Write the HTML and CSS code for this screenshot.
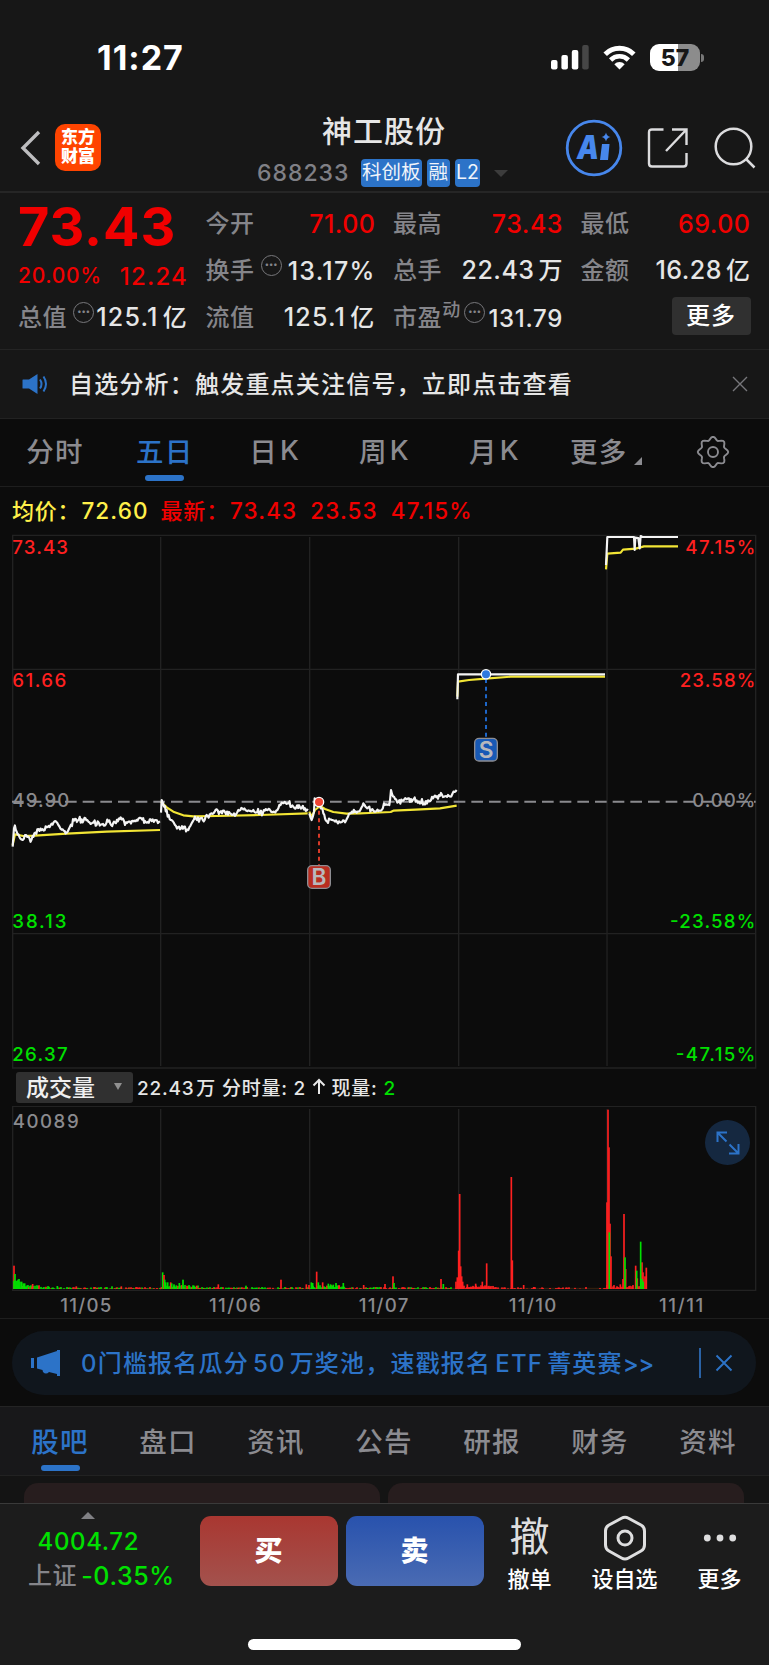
FILE: index.html
```html
<!DOCTYPE html>
<html lang="zh-CN">
<head>
    <meta charset="UTF-8">
    <meta name="viewport" content="width=device-width, initial-scale=1.0">
    <title>神工股份 688233</title>
    <link rel="stylesheet" href="styles.css">
</head>
<body>

<div class="status-bar">
    <span class="clock">11:27</span>
    <div class="status-icons">
        <svg class="signal" width="38" height="25" viewBox="0 0 38 25">
            <rect x="0" y="15" width="6.5" height="9.5" rx="2" fill="#fff"/>
            <rect x="10.4" y="10" width="6.5" height="14.5" rx="2" fill="#fff"/>
            <rect x="20.8" y="5" width="6.5" height="19.5" rx="2" fill="#fff"/>
            <rect x="31.2" y="0" width="6.5" height="24.5" rx="2" fill="#464646"/>
        </svg>
        <svg class="wifi" width="33" height="25" viewBox="0 0 33 25">
            <path d="M2.2 9.2a20.3 20.3 0 0 1 28.6 0" fill="none" stroke="#fff" stroke-width="5"/>
            <path d="M7.6 15a12.6 12.6 0 0 1 17.8 0" fill="none" stroke="#fff" stroke-width="4.6"/>
            <path d="M16.5 24.5l-5.2-5.3a7.4 7.4 0 0 1 10.4 0z" fill="#fff"/>
        </svg>
        <div class="battery">57</div>
    </div>
</div>

<header class="header">
    <svg class="back" width="22" height="36" viewBox="0 0 22 36"><path d="M19 2L3 18l16 16" fill="none" stroke="#bdbdbf" stroke-width="3.4"/></svg>
    <div class="logo">东方<br>财富</div>
    <div class="title">
        <h1>神工股份</h1>
        <div class="code">
            <span class="num">688233</span>
            <span class="tag">科创板</span>
            <span class="tag">融</span>
            <span class="tag">L2</span>
            <i class="tri-down"></i>
        </div>
    </div>
    <div class="actions">
        <svg width="58" height="58" viewBox="0 0 58 58">
            <circle cx="29" cy="29" r="26.8" fill="none" stroke="#4787ec" stroke-width="2.8"/>
            <text x="12" y="39.5" class="ai" textLength="22" lengthAdjust="spacingAndGlyphs">A</text>
            <path d="M37 25h7.500l-1.500 16h-8z" fill="#4787ec"/>
            <path d="M41 13.500q.8 3.700 4.500 4.500q-3.700.8-4.500 4.500q-.8-3.700-4.500-4.500q3.700-.8 4.500-4.500z" fill="#4787ec"/>
        </svg>
        <svg class="share" width="42" height="42" viewBox="0 0 42 42" fill="none" stroke="#dcdcde" stroke-width="2.400">
            <path d="M16.500 2.500H5Q2 2.500 2 5.500V36.500Q2 39.500 5 39.500H36.500Q39.500 39.500 39.500 36.500V26"/>
            <path d="M25 2.500H39.500V18M39 3L19 24"/>
        </svg>
        <svg class="search" width="44" height="44" viewBox="0 0 44 44" fill="none" stroke="#dcdcde" stroke-width="2.500">
            <circle cx="20.500" cy="20.500" r="17.800"/><path d="M33 33l8.500 8.500"/>
        </svg>
    </div>
</header>

<section class="quote">
    <div class="price">
        <div class="last">73.43</div>
        <div class="change"><span class="pct">20.00%</span><span>12.24</span></div>
    </div>
    <div class="cell"><label>今开</label><b class="up">71.00</b></div>
    <div class="cell"><label>最高</label><b class="up">73.43</b></div>
    <div class="cell"><label>最低</label><b class="up">69.00</b></div>
    <div class="cell"><label>换手</label><i class="dots">•••</i><b class="wide">13.17%</b></div>
    <div class="cell"><label>总手</label><b>22.43<em>万</em></b></div>
    <div class="cell"><label>金额</label><b>16.28<em>亿</em></b></div>
    <div class="cell"><label>总值</label><i class="dots">•••</i><b class="wide">125.1<em>亿</em></b></div>
    <div class="cell"><label>流值</label><b class="wide">125.1<em>亿</em></b></div>
    <div class="cell"><label>市盈</label><sup>动</sup><i class="dots">•••</i><b class="small">131.79</b></div>
    <div class="cell"><button class="more">更多</button></div>
</section>

<section class="notice">
    <svg width="28" height="22" viewBox="0 0 28 22">
        <path d="M1 6.500h6L15.500 1v20L7 15.500H1Q.5 15.500.5 15V7Q.5 6.500 1 6.500z" fill="#2c73c8"/>
        <path d="M18 6.500q3 4.500 0 9M21.500 3.500q5 7.500 0 15" fill="none" stroke="#2c73c8" stroke-width="2"/>
    </svg>
    <p>自选分析：触发重点关注信号，立即点击查看</p>
    <svg class="close" width="16" height="16" viewBox="0 0 16 16"><path d="M1 1l14 14M15 1L1 15" stroke="#77777b" stroke-width="1.400"/></svg>
</section>

<nav class="tabs periods">
    <a>分时</a>
    <a class="active">五日</a>
    <a>日<span>K</span></a>
    <a>周<span>K</span></a>
    <a>月<span>K</span></a>
    <a class="drop">更多<i class="corner"></i></a>
    <a><svg width="34" height="32" viewBox="-17 -16 34 32" fill="none" stroke="#8b8b90" stroke-width="1.900">
        <path id="gear"/>
        <circle r="5"/>
    </svg></a>
</nav>

<div class="legend">
    <span class="avg">均价：<b>72.60</b></span>
    <span class="new">最新：<b>73.43</b><b>23.53</b><b>47.15%</b></span>
</div>

<!-- chart units are a third of a pixel -->
<svg class="price-chart" id="priceChart" viewBox="0 0 2307 1605">
    <g class="grid">
        <path d="M38 4H2267V1602H38ZM38 406H2267M38 1199H2267"/>
        <path d="M482 9V1596M929 9V1596M1376 9V1596M1821 9V1596"/>
    </g>
    <path class="zero" d="M36 803H2267"/>
    <g id="lines"></g>
    <g class="marker sell">
        <path d="M1458 435V613"/>
        <circle cx="1458" cy="421" r="14"/>
        <rect x="1424" y="613" width="68" height="68" rx="13"/>
        <text x="1458" y="671">S</text>
    </g>
    <g class="marker buy">
        <path d="M957 830V994"/>
        <circle cx="957" cy="804" r="14"/>
        <rect x="923" y="995" width="68" height="68" rx="13"/>
        <text x="957" y="1054">B</text>
    </g>
    <g class="axis">
        <text class="up" x="37" y="61" textLength="167">73.43</text>
        <text class="up" x="37" y="460" textLength="162">61.66</text>
        <text x="37" y="820" textLength="171">49.90</text>
        <text class="down" x="37" y="1181" textLength="162">38.13</text>
        <text class="down" x="37" y="1580" textLength="166">26.37</text>
        <text class="up" x="2056" y="61" textLength="210">47.15%</text>
        <text class="up" x="2039" y="460" textLength="227">23.58%</text>
        <text x="2077" y="820" textLength="189">0.00%</text>
        <text class="down" x="2010" y="1181" textLength="256">-23.58%</text>
        <text class="down" x="2027" y="1580" textLength="239">-47.15%</text>
    </g>
</svg>

<div class="volume-head">
    <div class="select">成交量<i class="tri-down"></i></div>
    <p>22.43<em>万</em> 分时量: 2 <svg width="14" height="17" viewBox="0 0 14 17"><path d="M7 16V2M1.500 7.500L7 2l5.500 5.500" fill="none" stroke="#e8e8e8" stroke-width="2"/></svg> 现量: <span class="down">2</span></p>
</div>

<div class="volume">
    <svg id="volumeChart" class="volume-chart" viewBox="0 0 2307 636">
        <g class="grid">
            <path d="M38 1H2267V553H38Z"/>
            <path d="M482 9V552M929 9V552M1376 9V552M1821 9V552"/>
        </g>
        <g id="bars"></g>
        <g class="axis">
            <text x="38" y="66" textLength="198">40089</text>
            <text x="181" y="617" textLength="153">11/05</text>
            <text x="627" y="617" textLength="155">11/06</text>
            <text x="1076" y="617" textLength="149">11/07</text>
            <text x="1526" y="617" textLength="143">11/10</text>
            <text x="1977" y="617" textLength="133">11/11</text>
        </g>
    </svg>
    <div class="expand">
        <svg width="24" height="24" viewBox="0 0 24 24" fill="none" stroke="#2c73c8" stroke-width="2"><path d="M1.500 11V1.500H11M2 2l8.500 8.500M22.500 13v9.500H13M22 22l-8.500-8.500"/></svg>
    </div>
</div>

<div class="promo">
    <svg width="32" height="28" viewBox="0 0 32 28" fill="#2c73c8">
        <path d="M1 9h3v10H1zM7 8.500L27 2V1h3v26h-3v-2l-8-2q-3 3-6 0l-.5-2L7 19.500z"/>
    </svg>
    <p>0门槛报名瓜分<span>50</span>万奖池，速戳报名<span>ETF</span>菁英赛<b>&gt;&gt;</b></p>
    <i class="bar"></i>
    <svg class="close" width="18" height="18" viewBox="0 0 18 18"><path d="M1.500 1.500l15 15M16.500 1.500l-15 15" stroke="#2c73c8" stroke-width="1.900"/></svg>
</div>

<nav class="tabs sections">
    <a class="active">股吧</a>
    <a>盘口</a>
    <a>资讯</a>
    <a>公告</a>
    <a>研报</a>
    <a>财务</a>
    <a>资料</a>
</nav>

<div class="cards">
    <div class="card"></div>
    <div class="card"></div>
</div>

<footer class="toolbar">
    <div class="index">
        <i class="tri-up"></i>
        <div class="points">4004.72</div>
        <div class="index-row"><label>上证</label><span>-0.35%</span></div>
    </div>
    <button class="buy-btn">买</button>
    <button class="sell-btn">卖</button>
    <div class="tool t1"><span class="glyph">撤</span><span>撤单</span></div>
    <div class="tool t2">
        <svg width="44" height="46" viewBox="0 0 44 46" fill="none" stroke="#dededf" stroke-width="3">
            <path d="M18.500 3.200q3.500-2 7 0L38 10q3.500 2 3.500 6v14q0 4-3.500 6l-12.500 7q-3.500 2-7 0L6 36q-3.500-2-3.500-6V16q0-4 3.500-6z"/>
            <circle cx="22" cy="23" r="7"/>
        </svg>
        <span>设自选</span>
    </div>
    <div class="tool t3">
        <svg width="44" height="46" viewBox="0 0 44 46" fill="#dededf"><circle cx="9.300" cy="23" r="3.400"/><circle cx="22" cy="23" r="3.400"/><circle cx="34.700" cy="23" r="3.400"/></svg>
        <span>更多</span>
    </div>
    <div class="home"></div>
</footer>

<script src="chart.js"></script>
</body>
</html>
```
FILE: styles.css
```css
* {
    box-sizing: border-box;
}

body {
    margin: 0;
    width: 769px;
    height: 1665px;
    overflow: hidden;
    background: #0c0c0c;
    color: #e6e6e6;
    font-family: Inter, "Noto Sans CJK SC", sans-serif;
    font-size: 24px;
    font-weight: 500;
}

p, h1 {
    margin: 0;
}

i, em {
    font-style: normal;
}

svg {
    display: block;
    flex: none;
}

button {
    border: none;
    padding: 0;
    font-family: inherit;
}

.up {
    color: #f00000;
    fill: #ff2020;
}

.down {
    color: #00e000;
    fill: #00e000;
}

/* Status bar */
.status-bar {
    height: 104px;
    padding: 11px 65px 0 97px;
    background: #171717;
    display: flex;
    justify-content: space-between;
    align-items: center;
}

.clock {
    font-size: 34px;
    font-weight: 700;
    color: #fff;
    line-height: 1;
    letter-spacing: 1px;
}

.status-icons {
    display: flex;
    align-items: center;
}

.wifi {
    margin: 0 14px 0 14px;
}

.battery {
    position: relative;
    width: 50px;
    height: 27px;
    border-radius: 9px;
    background: linear-gradient(to right, #fff 57%, #8c8c8c 57%);
    color: #171717;
    font-size: 23px;
    font-weight: 800;
    line-height: 28px;
    text-align: center;
    margin-right: 4px;
}

.battery::after {
    content: "";
    position: absolute;
    right: -4px;
    top: 10px;
    width: 3px;
    height: 8px;
    border-radius: 0 3px 3px 0;
    background: #777;
}

/* Header */
.header {
    height: 89px;
    background: #171717;
    border-bottom: 2px solid #262626;
    display: flex;
    align-items: center;
    padding: 0 12px 0 20px;
}

.logo {
    width: 46px;
    height: 47px;
    margin: -1px 0 0 13px;
    padding-top: 4px;
    border-radius: 10px;
    background: #ff4400;
    color: #fff;
    font-size: 17px;
    font-weight: 900;
    line-height: 19.500px;
    text-align: center;
}

.title {
    flex: none;
    margin-left: 156px;
    width: 250px;
    height: 87px;
}

.title h1 {
    height: 50px;
    padding: 8px 0 0 65px;
    font-size: 30px;
    font-weight: 500;
    line-height: 38px;
    letter-spacing: 1px;
}

.code {
    display: flex;
    align-items: center;
    margin-top: 5px;
    white-space: nowrap;
}

.num {
    flex: none;
    width: 100.500px;
    color: #808086;
    font-size: 23px;
    line-height: 28px;
    letter-spacing: 1px;
}

.tag {
    height: 28px;
    padding: 0 1.500px;
    margin-right: 5px;
    border-radius: 4px;
    background: #2c73c8;
    color: #f0f4fa;
    font-size: 19.500px;
    font-weight: 400;
    line-height: 27px;
}

.num + .tag {
    margin-left: 3px;
}

.tri-down {
    border: 7px solid transparent;
    border-top-color: #3c3c3c;
    border-bottom: none;
    margin-left: 9px;
}

.actions {
    margin-left: auto;
    display: flex;
    align-items: center;
}

.ai {
    font-size: 33px;
    font-weight: 900;
    font-style: italic;
    fill: #4787ec;
}

.share {
    margin-left: 24px;
}

.search {
    margin-left: 24px;
}

/* Quote */
.quote {
    height: 157px;
    padding: 7px 20px 0 18px;
    background: #171717;
    border-bottom: 1px solid #242424;
    display: grid;
    grid-template-columns: repeat(4, 168px);
    grid-template-rows: repeat(3, 47px);
    column-gap: 19.500px;
}

.price {
    grid-row: span 2;
    color: #f00000;
}

.last {
    font-size: 54px;
    font-weight: 700;
    line-height: 54px;
    height: 58px;
    letter-spacing: .9px;
}

.change {
    display: flex;
    justify-content: space-between;
    align-items: center;
    line-height: 38px;
    letter-spacing: 1.200px;
    margin-right: -2px;
}

.pct {
    font-size: 21px;
    line-height: 32px;
    margin-top: -3px;
    letter-spacing: .7px;
}

.cell {
    display: flex;
    align-items: center;
    line-height: 46px;
}

.cell label, .index label {
    color: #85858a;
    letter-spacing: .6px;
}

.cell b {
    margin: 0 -2px 0 auto;
    font-size: 25px;
    font-weight: 500;
    letter-spacing: .5px;
    white-space: nowrap;
}

.cell b.wide {
    letter-spacing: 1.250px;
}

.cell b.small {
    font-size: 24px;
    letter-spacing: .7px;
    padding-top: 3px;
}

.cell em {
    margin-left: 4px;
    font-size: 24px;
}

.cell sup {
    width: 20px;
    height: 40px;
    color: #85858a;
    font-size: 18px;
    line-height: 24px;
}

.dots {
    width: 21px;
    height: 21px;
    margin: -10px -4px 0 6px;
    border: 1.500px solid #77777b;
    border-radius: 50%;
    color: #85858a;
    font-size: 8px;
    line-height: 17px;
    text-align: center;
    flex: none;
}

sup + .dots {
    margin-left: 2px;
}

.more {
    width: 79px;
    height: 38px;
    margin: -4px -2px 0 auto;
    border-radius: 4px;
    background: #303030;
    color: #fff;
    font-size: 24px;
    font-weight: 500;
    letter-spacing: 1px;
    line-height: 37px;
}

/* Notice */
.notice {
    height: 69px;
    padding: 0 21px 0 22px;
    background: #171717;
    border-bottom: 1px solid #222;
    display: flex;
    align-items: center;
}

.notice p {
    margin: -4px 0 0 19px;
    letter-spacing: 1.200px;
}

.notice .close {
    margin: 0 0 0 auto;
}

/* Tabs */
.tabs {
    display: flex;
    font-size: 27.500px;
    color: #8b8b90;
}

.tabs a {
    position: relative;
    width: 108px;
    padding-bottom: 2px;
    display: flex;
    justify-content: center;
    align-items: center;
    letter-spacing: 1.200px;
}

.tabs .active {
    color: #2c73c8;
}

.tabs .active::after {
    content: "";
    position: absolute;
    bottom: 4px;
    left: 50%;
    width: 39px;
    height: 6px;
    margin-left: -19.500px;
    border-radius: 3px;
    background: #2c73c8;
}

.periods {
    height: 68px;
    border-bottom: 1px solid #1e1e1e;
}

.periods a {
    width: 110px;
    padding-bottom: 5px;
}

.periods .active::after {
    bottom: 5px;
}

.periods .drop {
    padding-left: 4px;
}

.periods a:last-child {
    padding: 0 2px 2px 0;
}

.periods span {
    margin-left: 2px;
}

.corner {
    border: 4px solid #8b8b90;
    border-left-color: transparent;
    border-top-color: transparent;
    margin: 22px 0 0 7px;
}

/* Legend above the chart */
.legend {
    height: 47px;
    padding: 0 0 4px 12px;
    display: flex;
    align-items: center;
    font-size: 22px;
    white-space: nowrap;
}

.legend span {
    letter-spacing: .8px;
}

.legend b {
    font-size: 22.500px;
    font-weight: 500;
    letter-spacing: 1.100px;
    margin: 0 12px 0 1px;
}

.avg {
    color: #fff04a;
}

.new {
    color: #f00000;
}

/* Charts */
.price-chart {
    width: 769px;
    height: 535px;
}

.grid {
    fill: none;
    stroke: #222;
    stroke-width: 4;
}

.zero {
    stroke: #8a8a8e;
    stroke-width: 6;
    stroke-dasharray: 35 18;
}

.axis text {
    fill: #8a8a8e;
    font-size: 56px;
}

.axis text.up {
    fill: #ff2020;
}

.axis text.down {
    fill: #00e000;
}

#lines path {
    fill: none;
    stroke-width: 6.500;
    stroke-linejoin: round;
}

.avg-line {
    stroke: #f2e535;
}

.price-line {
    stroke: #f4f4f4;
}

.marker path {
    stroke-width: 6;
    stroke-dasharray: 12 11;
}

.marker rect {
    stroke: #8d8d92;
    stroke-width: 4;
}

.marker text {
    fill: #b8b8bc;
    font-size: 68px;
    font-weight: 600;
    text-anchor: middle;
}

.marker circle {
    stroke: #fff;
    stroke-width: 4;
}

.sell path {
    stroke: #1d66c9;
}

.sell circle {
    fill: #2f7ae0;
}

.sell rect {
    fill: #1859b5;
}

.buy path {
    stroke: #d83a28;
}

.buy circle {
    fill: #f04433;
}

.buy rect {
    fill: #b92d20;
}

/* Volume */
.volume-head {
    height: 37px;
    padding-left: 16px;
    display: flex;
    align-items: center;
    font-size: 19px;
}

.select {
    width: 117px;
    height: 31px;
    margin-top: -1px;
    padding: 0 0 2px 10px;
    border-radius: 3px;
    background: #303030;
    display: flex;
    align-items: center;
    font-size: 23px;
    color: #f0f0f0;
}

.select .tri-down {
    border-width: 7px 4.500px 0;
    border-top-color: #909090;
    margin-left: 19px;
}

.volume-head p {
    margin: -3px 0 0 4px;
    white-space: pre;
    letter-spacing: .75px;
}

.volume-head em {
    margin-left: 2px;
}

.volume-head p svg {
    display: inline-block;
}

.volume {
    position: relative;
    height: 213px;
    border-bottom: 1px solid #1e1e1e;
}

.volume-chart {
    width: 769px;
    height: 212px;
}

.expand {
    position: absolute;
    left: 705px;
    top: 14px;
    width: 45px;
    height: 45px;
    border-radius: 50%;
    background: #152840;
    display: flex;
    align-items: center;
    justify-content: center;
}

/* Promo */
.promo {
    height: 64px;
    margin: 12px 13px 11px 12px;
    padding: 0 23px 0 18px;
    border-radius: 32px;
    background: #10161d;
    color: #2c73c8;
    display: flex;
    align-items: center;
}

.promo p {
    margin: -4px 0 0 19px;
    letter-spacing: 1.200px;
    white-space: nowrap;
}

.promo p span {
    margin: 0 4px;
}

.promo b {
    font-weight: 500;
    letter-spacing: -.6px;
}

.promo .bar {
    width: 2px;
    height: 30px;
    margin-left: auto;
    background: #2a62a5;
}

.promo .close {
    margin-left: 14px;
}

/* Section tabs */
.sections {
    height: 70px;
    padding-left: 6px;
    background: #18181a;
    border-top: 1px solid #242424;
    border-bottom: 1px solid #222;
}

.cards {
    height: 27px;
    padding: 7px 24px 0;
    background: #141414;
    display: flex;
    gap: 8px;
}

.card {
    width: 356px;
    height: 20px;
    border-radius: 14px 14px 0 0;
    background: #271d1e;
}

/* Bottom toolbar */
.toolbar {
    position: relative;
    height: 162px;
    background: #1c1c1c;
    border-top: 1px solid #3a3a3a;
    display: flex;
    padding-top: 12px;
}

.index {
    width: 199.500px;
    color: #00e000;
}

.tri-up {
    display: block;
    width: 14px;
    margin: -4px 0 0 81px;
    border: 7px solid transparent;
    border-bottom-color: #808084;
    border-top: none;
}

.points {
    padding-left: 37.500px;
    margin-top: 8px;
    line-height: 30px;
    letter-spacing: .65px;
}

.index-row {
    padding-left: 28px;
    margin-top: 2px;
    line-height: 34px;
    display: flex;
    gap: 4px;
    font-size: 25px;
    letter-spacing: .6px;
}

.index label {
    font-size: 24px;
}

.toolbar button {
    width: 138px;
    height: 70px;
    border-radius: 11px;
    color: #fff;
    font-size: 28px;
    font-weight: 800;
    line-height: 68px;
}

.buy-btn {
    background: linear-gradient(#a93731, #a3524d);
}

.sell-btn {
    margin-left: 8px;
    background: linear-gradient(#2852ad, #4a6bb3);
}

.tool {
    height: 84px;
    width: 90px;
    display: flex;
    flex-direction: column;
    align-items: center;
    font-size: 22px;
    line-height: 36px;
    color: #fff;
}

.tool svg, .glyph {
    height: 46px;
    margin: -1px 0 0;
}

.glyph {
    font-size: 40px;
    font-weight: 400;
    line-height: 44px;
    color: #dededf;
}

.t1 {
    margin-left: 1px;
}

.t2 {
    margin-left: 5px;
}

.t3 {
    margin-left: 5px;
}

.home {
    position: absolute;
    left: 248px;
    bottom: 15px;
    width: 273px;
    height: 11px;
    border-radius: 6px;
    background: #fff;
}
```
FILE: chart.js
```js
// one entry per trading day: vertical offset, price points, average points
const days = [
    {
        dy: 708, noise: 7,
        price: [38,230, 42,175, 50,185, 58,200, 68,210, 75,195, 85,200, 95,208, 103,190, 112,178, 125,180, 140,172, 152,165, 166,153, 175,165, 188,178, 200,188, 210,170, 222,152, 245,148, 262,150, 275,160, 290,165, 312,167, 325,155, 345,158, 362,142, 372,153, 390,155, 410,150, 424,145, 435,153, 455,153, 480,154],
        avg: [38,225, 45,193, 70,198, 105,197, 200,191, 320,185, 480,180]
    },
    {
        dy: 708, noise: 7,
        price: [483,128, 485,90, 492,110, 500,120, 503,140, 512,150, 525,165, 540,178, 555,170, 565,180, 575,160, 585,140, 600,145, 614,150, 620,135, 635,130, 650,118, 660,125, 690,130, 708,133, 715,120, 730,118, 760,120, 780,128, 800,120, 820,125, 835,115, 845,98, 860,102, 880,110, 900,112, 923,116],
        avg: [483,95, 500,112, 520,125, 550,136, 580,139, 650,138, 780,135, 923,130]
    },
    {
        dy: 708, noise: 7,
        price: [928,130, 935,150, 942,125, 944,85, 950,105, 957,95, 965,115, 970,130, 978,152, 990,148, 1020,157, 1038,152, 1050,130, 1070,128, 1082,118, 1090,100, 1105,112, 1120,122, 1145,120, 1152,100, 1168,105, 1173,60, 1182,80, 1192,98, 1207,92, 1227,85, 1247,95, 1272,100, 1287,92, 1302,80, 1317,75, 1332,80, 1347,78, 1357,72, 1370,60],
        avg: [928,125, 935,140, 945,120, 960,108, 975,117, 1000,126, 1040,131, 1080,130, 1107,129, 1172,126, 1180,122, 1247,119, 1320,115, 1370,107]
    },
    {
        dy: 348, noise: 0,
        price: [1372,148, 1374,73, 1815,73],
        avg: [1372,140, 1374,95, 1407,90, 1457,86, 1532,80, 1815,80]
    },
    {
        dy: -372, noise: 0,
        price: [1818,465, 1822,381, 1902,381, 1904,420, 1906,383, 1915,384, 1919,415, 1922,378, 1927,381, 2034,381],
        avg: [1818,478, 1822,431, 1862,428, 1869,419, 1907,416, 1932,409, 2034,409]
    }
];

// x, height, colour
const peaks = [
    42,70,'r', 42,25,'g', 45,45,'g', 48,25,'g', 51,24,'g', 54,28,'g', 57,30,'g', 60,22,'g', 65,22,'g', 70,17,'g', 74,17,'g', 98,15,'r', 172,9,'g', 229,8,'r', 336,8,'g', 364,8,'r',
    488,50,'g', 492,42,'r', 494,28,'g', 497,20,'g', 503,20,'g', 512,20,'r', 515,17,'g', 522,14,'g', 529,11,'g', 538,18,'g', 549,28,'g', 590,10,'r', 655,14,'r', 738,10,'g', 843,28,'r', 919,14,'r', 927,12,'r',
    934,20,'g', 938,18,'g', 950,52,'r', 955,20,'g', 968,20,'r', 985,16,'g', 992,14,'g', 1000,13,'g', 1008,18,'g', 1018,10,'r', 1030,18,'g', 1091,12,'r', 1155,15,'r', 1179,38,'r', 1182,18,'g', 1323,30,'r', 1330,15,'g', 1368,22,'r', 1372,35,'r',
    1376,115,'r', 1379,285,'r', 1382,68,'r', 1385,38,'r', 1388,22,'r', 1402,14,'r', 1427,16,'r', 1447,22,'r', 1460,77,'r', 1534,336,'r', 1537,86,'r', 1571,12,'r', 1601,6,'r',
    1821,260,'r', 1824,538,'r', 1827,425,'r', 1830,196,'r', 1828,170,'g', 1833,98,'r', 1861,14,'r', 1869,30,'r', 1872,225,'r', 1877,60,'r', 1875,95,'g', 1907,70,'r', 1912,32,'r', 1910,55,'g', 1926,80,'r', 1929,50,'r', 1922,142,'g', 1926,30,'g', 1930,22,'g', 1935,38,'r', 1939,64,'r'
];

let seed = 7;
function rand() {
    seed = (seed * 16807) % 2147483647;
    return seed / 2147483647;
}

function line(points, noise) {
    let d = `M${points[0]} ${points[1]}`;
    for (let i = 2; i < points.length; i += 2) {
        const [x0, y0, x1, y1] = points.slice(i - 2, i + 2);
        const steps = noise ? Math.max(1, Math.round((x1 - x0) / 3)) : 1;
        for (let s = 1; s <= steps; s++) {
            const n = s < steps ? (rand() - .5) * noise * (rand() > .8 ? 3.4 : 1.6) : 0;
            d += `L${(x0 + (x1 - x0) * s / steps).toFixed(1)} ${(y0 + (y1 - y0) * s / steps + n).toFixed(1)}`;
        }
    }
    return d;
}

document.getElementById('lines').innerHTML = days.map(day =>
    `<g transform="translate(0 ${day.dy})">
        <path class="avg-line" d="${line(day.avg, 0)}"/>
        <path class="price-line" d="${line(day.price, day.noise)}"/>
    </g>`).join('');

function bar(x, h, c) {
    return `<rect x="${x - 2.5}" y="${549 - h}" width="5" height="${h}" fill="${c === 'r' ? '#ff2020' : '#00e000'}"/>`;
}

// small background volume
let bars = '<path d="M40 547H1936" stroke="#3a2410" stroke-width="3"/>';
for (let x = 42; x < 1935; x += 3) {
    const onlyRed = x > 1372;
    const start = [40, 485, 931, 1376, 1821].filter(s => s <= x).pop();
    const near = x - start < 110;
    if (rand() > (near ? .1 : onlyRed ? .7 : .35)) {
        const h = near ? 3 + rand() * 9 : 1 + rand() * 5;
        bars += bar(x, h, onlyRed || rand() > (near ? .75 : .5) ? 'r' : 'g');
    }
}
for (let i = 0; i < peaks.length; i += 3) {
    bars += bar(peaks[i], peaks[i + 1], peaks[i + 2]);
}
document.getElementById('bars').innerHTML = bars;

// eight-lobed cog outline
let gear = '';
for (let a = 0; a < 360; a += 6) {
    const r = 13.6 + 1.6 * Math.cos(a * 8 * Math.PI / 180);
    const t = a * Math.PI / 180;
    gear += (a ? 'L' : 'M') + (r * Math.cos(t)).toFixed(2) + ' ' + (r * Math.sin(t)).toFixed(2);
}
document.getElementById('gear').setAttribute('d', gear + 'Z');
```
